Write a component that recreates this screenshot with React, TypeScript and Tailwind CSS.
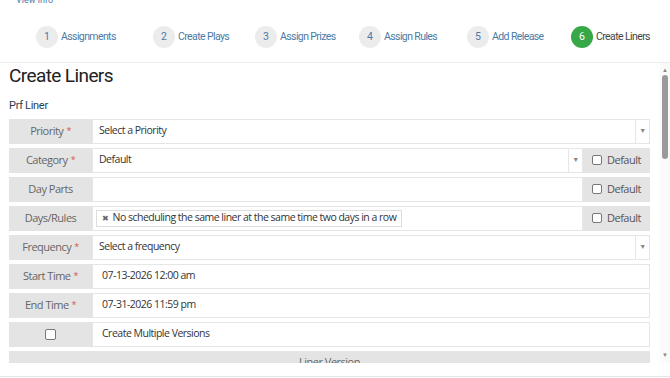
import React from "react"

const steps = [
  { n: 1, label: "Assignments", w: "w-[117px]" },
  { n: 2, label: "Create Plays", w: "w-[102px]" },
  { n: 3, label: "Assign Prizes", w: "w-[104px]" },
  { n: 4, label: "Assign Rules", w: "w-[108px]" },
  { n: 5, label: "Add Release", w: "w-[104px]" },
  { n: 6, label: "Create Liners", w: "" },
]

const narrow = { fontFamily: 'Roboto, "Open Sans", sans-serif' }
const body = { fontFamily: '"Open Sans", sans-serif' }

const Caret = () => <span className="text-[7px] text-[#888]">▼</span>

const Label = ({ text, req }: { text: string; req?: boolean }) => (
  <div className="w-[83px] shrink-0 bg-[#e4e4e4] flex items-center justify-center text-[11px] tracking-[-0.5px] text-[#666]" style={body}>
    {text}
    {req && <span className="text-[#d9534f] ml-[3px] text-[9px]">*</span>}
  </div>
)

const DefaultAddon = () => (
  <div className="w-[67px] shrink-0 bg-[#e4e4e4] flex items-center pl-[9px] gap-[5px] text-[11px] tracking-[-0.5px] text-[#555]" style={body}>
    <span className="w-[10px] h-[10px] border border-[#777] rounded-[2px] bg-white" />
    Default
  </div>
)

const Row = ({ children }: { children: React.ReactNode }) => (
  <div className="flex h-[25px] shrink-0">{children}</div>
)

const Field = ({ children, className = "" }: { children?: React.ReactNode; className?: string }) => (
  <div className={`flex-1 flex items-center border border-[#e6e6e6] bg-white text-[10.5px] tracking-[-0.5px] text-[#333] ${className}`} style={body}>
    {children}
  </div>
)

export default function App() {
  return (
    <div className="w-[670px] h-[378px] overflow-hidden bg-white flex flex-col">
      <div className="h-[63px] shrink-0 border-b border-[#ececec] relative">
        <a className="absolute left-[16px] top-[-6px] text-[9px] text-[#4a7ba7]" style={narrow}>View info</a>
        <div className="flex items-center pl-[36px] pt-[26px]">
          {steps.map((s) => (
            <div key={s.n} className={`flex items-center ${s.w}`}>
              <div
                className={`w-[22px] h-[22px] rounded-full flex items-center justify-center text-[10.5px] ${
                  s.n === 6 ? "bg-[#37a847] text-white" : "bg-[#ececec] text-[#4a7ba7]"
                }`}
                style={narrow}
              >
                {s.n}
              </div>
              <span
                className={`ml-[3px] text-[10.5px] tracking-[-0.6px] ${s.n === 6 ? "text-[#444]" : "text-[#4a7ba7]"}`}
                style={narrow}
              >
                {s.label}
              </span>
            </div>
          ))}
        </div>
      </div>

      <div className="flex h-[300px] shrink-0">
        <div className="flex-1 min-w-0 pl-[9px] pr-[10px] overflow-hidden">
          <h1 className="text-[19px] leading-[24px] tracking-[-0.6px] text-[#222] mt-[1px]" style={narrow}>Create Liners</h1>
          <div className="text-[11px] tracking-[-0.3px] text-[#2c3e50] mt-[10px]" style={narrow}>Prf Liner</div>
          <div className="flex flex-col gap-[4px] mt-[4px]">
            <Row>
              <Label text="Priority" req />
              <Field className="pl-[6px]">
                <span className="flex-1">Select a Priority</span>
                <span className="w-[14px] h-full border-l border-[#e6e6e6] flex items-center justify-center"><Caret /></span>
              </Field>
            </Row>
            <Row>
              <Label text="Category" req />
              <Field className="pl-[6px]">
                <span className="flex-1">Default</span>
                <span className="w-[14px] h-full border-l border-[#e6e6e6] flex items-center justify-center"><Caret /></span>
              </Field>
              <DefaultAddon />
            </Row>
            <Row>
              <Label text="Day Parts" />
              <Field />
              <DefaultAddon />
            </Row>
            <Row>
              <Label text="Days/Rules" />
              <Field className="pl-[3px]">
                <span className="h-[17px] border border-[#ddd] flex items-center px-[5px] gap-[4px]">
                  <span className="text-[8px] text-[#666]">✖</span>
                  No scheduling the same liner at the same time two days in a row
                </span>
              </Field>
              <DefaultAddon />
            </Row>
            <Row>
              <Label text="Frequency" req />
              <Field className="pl-[6px]">
                <span className="flex-1">Select a frequency</span>
                <span className="w-[14px] h-full border-l border-[#e6e6e6] flex items-center justify-center"><Caret /></span>
              </Field>
            </Row>
            <Row>
              <Label text="Start Time" req />
              <Field className="pl-[9px]">07-13-2026 12:00 am</Field>
            </Row>
            <Row>
              <Label text="End Time" req />
              <Field className="pl-[9px]">07-31-2026 11:59 pm</Field>
            </Row>
            <Row>
              <div className="w-[83px] shrink-0 bg-[#e4e4e4] flex items-center justify-center">
                <span className="w-[11px] h-[11px] border border-[#777] rounded-[2px] bg-white" />
              </div>
              <Field className="pl-[9px]">Create Multiple Versions</Field>
            </Row>
            <div className="h-[25px] shrink-0 bg-[#e4e4e4] flex justify-center pt-[3px] text-[11px] tracking-[-0.5px] text-[#666]" style={body}>
              Liner Version
            </div>
          </div>
        </div>
        <div className="w-[10px] shrink-0 bg-[#fafafa] flex flex-col items-center pt-[3px] pb-[4px]">
          <span className="text-[6px] leading-[8px] text-[#888]">▲</span>
          <div className="w-[6px] h-[84px] bg-[#9a9a9a] rounded-[3px] mt-[1px]" />
          <div className="flex-1" />
          <span className="text-[6px] leading-[8px] text-[#888]">▼</span>
        </div>
      </div>
      <div className="h-[13px] shrink-0" />
      <div className="h-[2px] shrink-0 border-t border-[#e6e6e6]" />
    </div>
  )
}
